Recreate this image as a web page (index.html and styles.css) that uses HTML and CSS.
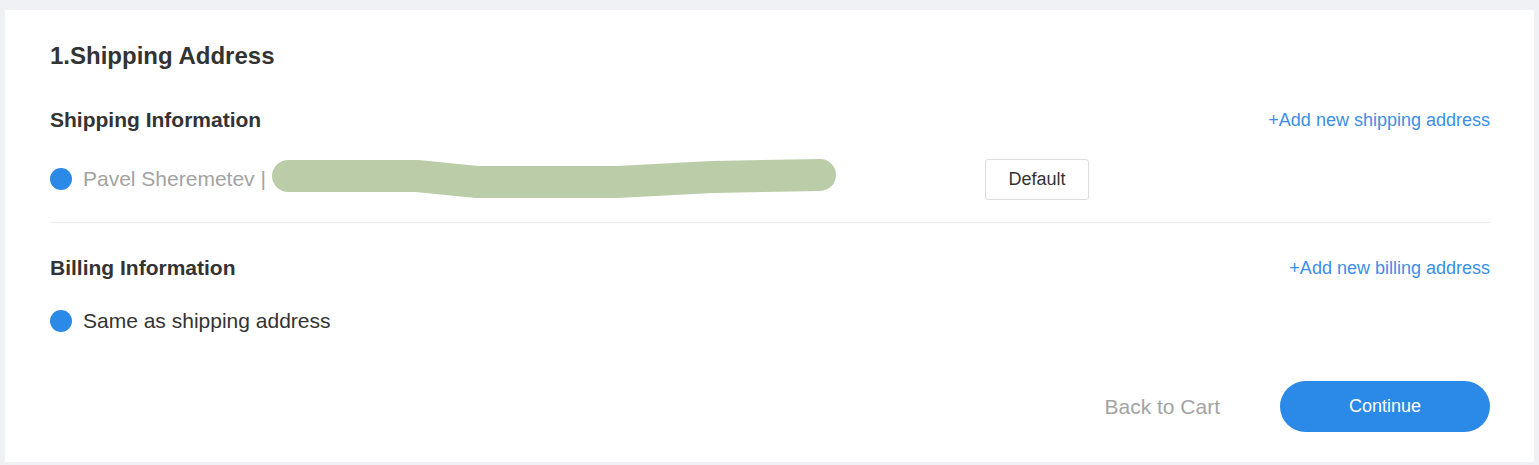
FILE: index.html
```html
<!DOCTYPE html>
<html>
<head>
<meta charset="utf-8">
<link rel="stylesheet" href="styles.css">
</head>
<body>
<div class="card">
  <h1 class="title">1.Shipping Address</h1>

  <div class="section-head">
    <h2 class="subtitle">Shipping Information</h2>
    <a class="add-link">+Add new shipping address</a>
  </div>
  <div class="option-row">
    <div class="option-label">
      <span class="radio"></span>
      <span class="name">Pavel Sheremetev |</span>
      <svg class="redact" width="572" height="42" viewBox="0 0 572 42">
        <polyline points="16,18 145,18 205,24 345,24 440,19 548,17" fill="none" stroke="#bbcda8" stroke-width="32" stroke-linecap="round" stroke-linejoin="round"/>
      </svg>
    </div>
    <button class="default-btn">Default</button>
  </div>

  <div class="divider"></div>

  <div class="section-head billing">
    <h2 class="subtitle">Billing Information</h2>
    <a class="add-link">+Add new billing address</a>
  </div>
  <div class="same-row">
    <span class="radio"></span>
    <span class="same-text">Same as shipping address</span>
  </div>

  <div class="footer">
    <a class="back-link">Back to Cart</a>
    <button class="continue-btn">Continue</button>
  </div>
</div>
</body>
</html>
```

FILE: styles.css
```css
* { box-sizing: border-box; }
html, body { margin: 0; }
body {
  background: #eff1f5;
  padding: 10px 5px 3px 5px;
  font-family: "Liberation Sans", Arial, sans-serif;
  color: #333;
}
.card {
  background: #fff;
  height: 452px;
  padding: 30px 44px 30px 45px;
  display: flex;
  flex-direction: column;
}
.title {
  margin: 0;
  font-size: 24px;
  font-weight: bold;
  line-height: 32px;
  color: #333;
}
.section-head {
  margin-top: 32px;
  height: 32px;
  display: flex;
  align-items: center;
  justify-content: space-between;
}
.section-head.billing { margin-top: 29px; }
.subtitle {
  margin: 0;
  font-size: 21px;
  font-weight: bold;
  color: #333;
}
.add-link {
  font-size: 18px;
  color: #3b8fe8;
  cursor: pointer;
}
.option-row {
  margin-top: 22px;
  height: 42px;
  display: flex;
  align-items: center;
}
.option-label {
  flex: 0 0 935px;
  display: flex;
  align-items: center;
}
.radio {
  width: 22px;
  height: 22px;
  border-radius: 50%;
  background: #2b8ae8;
  flex: 0 0 22px;
}
.name {
  margin-left: 11px;
  font-size: 21px;
  color: #a3a3a3;
}
.redact { margin-left: 6px; }
.default-btn {
  width: 104px;
  height: 41px;
  background: #fff;
  border: 1px solid #dcdcdc;
  border-radius: 3px;
  font-family: inherit;
  font-size: 18px;
  color: #333;
}
.divider {
  margin-top: 22px;
  height: 1px;
  background: #ececec;
}
.same-row {
  margin-top: 23px;
  height: 28px;
  display: flex;
  align-items: center;
}
.same-text {
  margin-left: 11px;
  font-size: 21px;
  color: #333;
}
.footer {
  margin-top: 46px;
  display: flex;
  justify-content: flex-end;
  align-items: center;
  gap: 60px;
}
.back-link {
  font-size: 21px;
  color: #a3a3a3;
}
.continue-btn {
  width: 210px;
  height: 51px;
  border: none;
  border-radius: 26px;
  background: #2b8ae8;
  color: #fff;
  font-family: inherit;
  font-size: 18px;
}
```
